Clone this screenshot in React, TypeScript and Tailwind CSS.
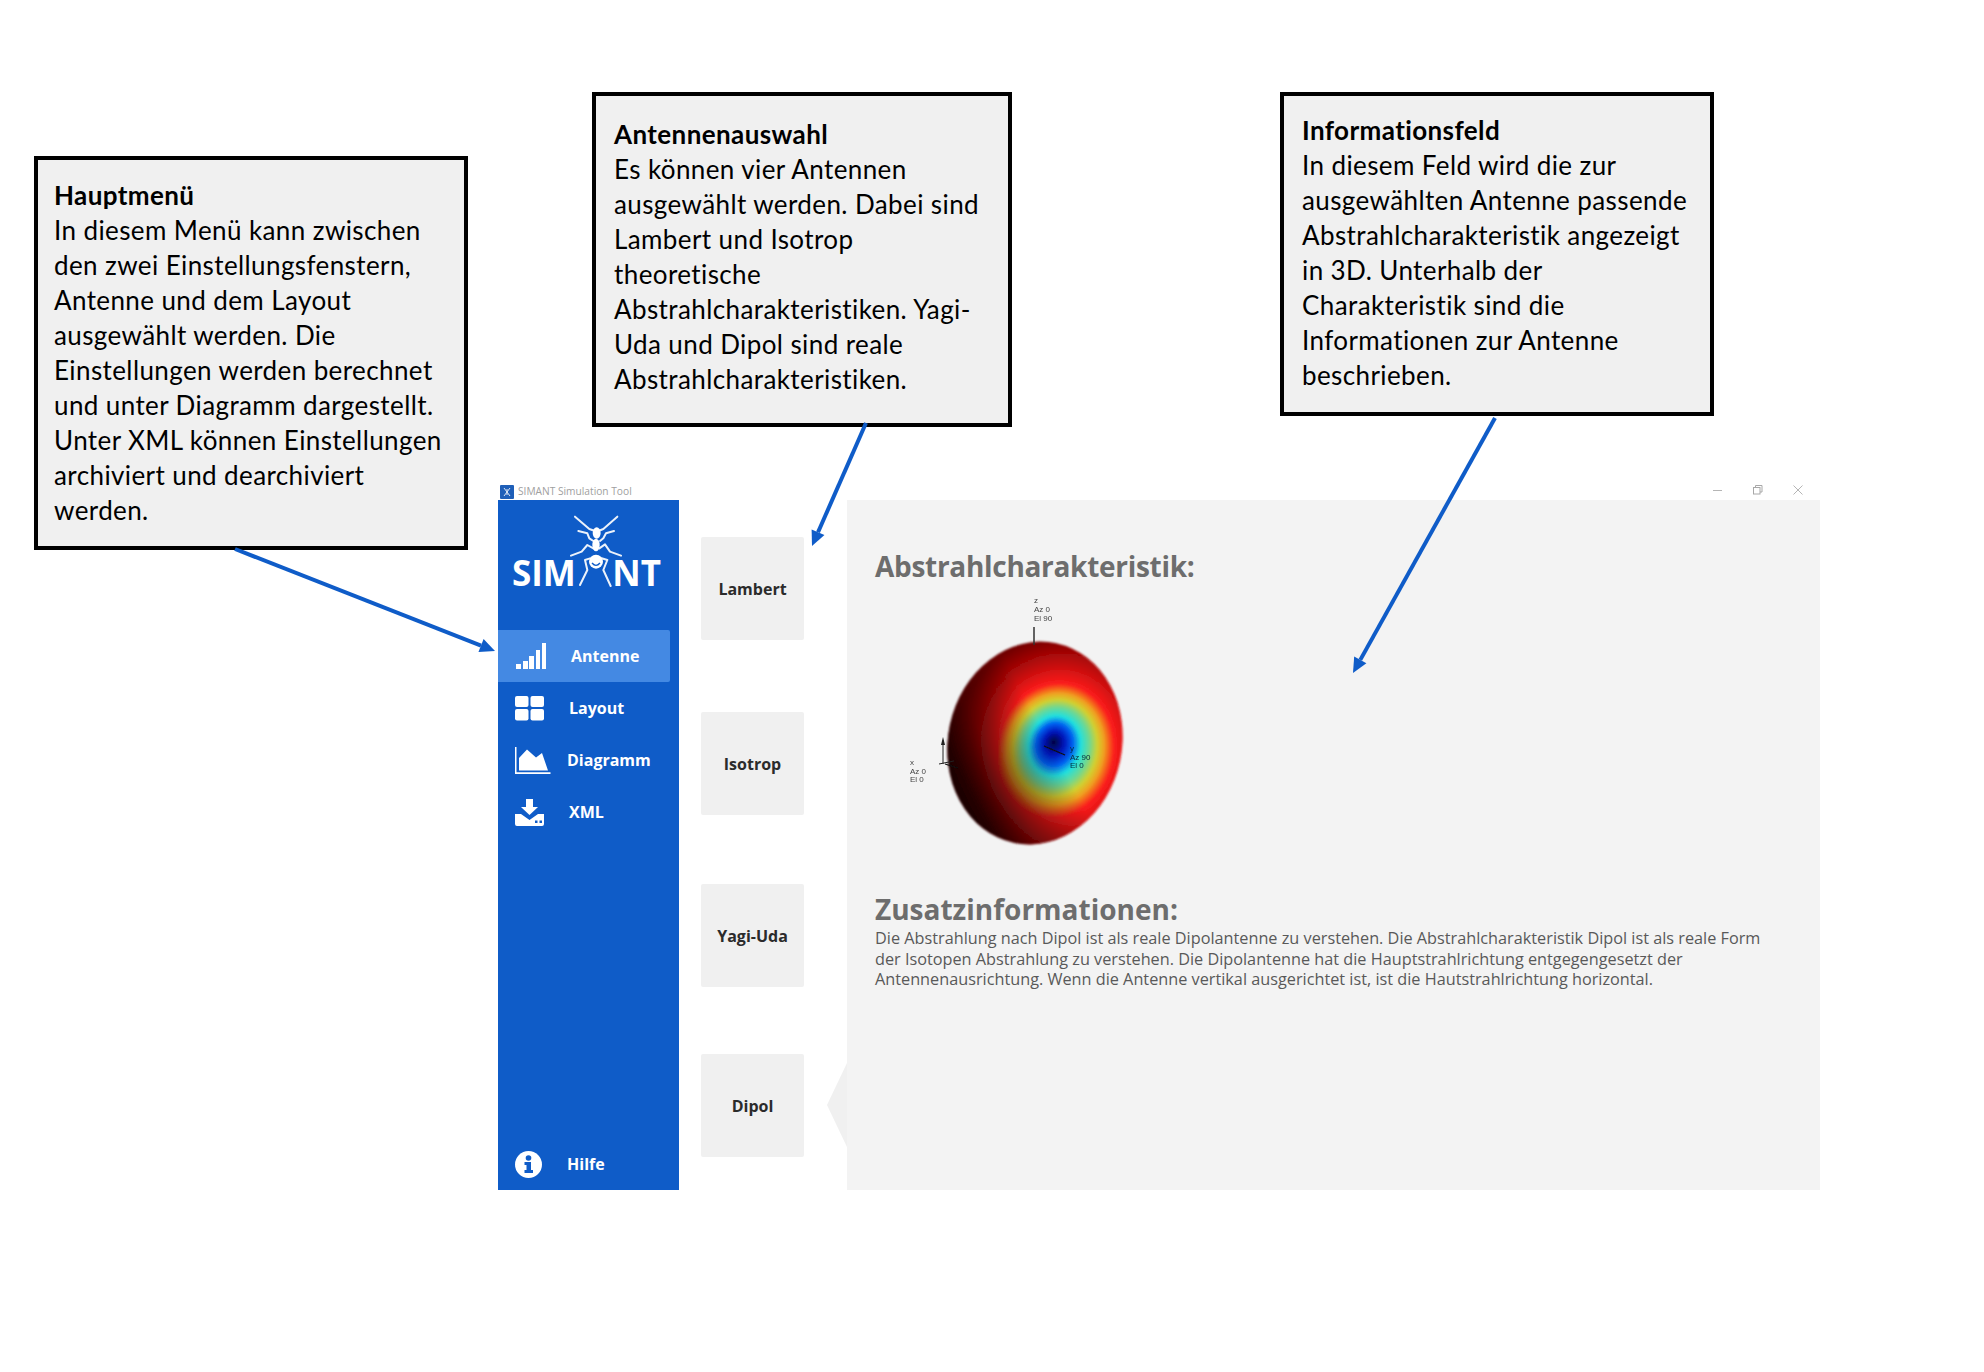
const body = "font-['Lato',sans-serif]";

function Callout({ className, title, lines }: { className: string; title: string; lines: string[] }) {
  return (
    <div className={`absolute border-4 border-black bg-[#f0f0f0] text-[26px] leading-[35px] tracking-[0.4px] text-black whitespace-nowrap ${body} ${className}`}>
      <div className="font-bold">{title}</div>
      {lines.map((l) => (
        <div key={l}>{l}</div>
      ))}
    </div>
  );
}

function Arrow({ x1, y1, x2, y2 }: { x1: number; y1: number; x2: number; y2: number }) {
  const a = Math.atan2(y2 - y1, x2 - x1);
  const len = 15;
  const w = 7;
  const bx = x2 - Math.cos(a) * len;
  const by = y2 - Math.sin(a) * len;
  const px = -Math.sin(a) * w;
  const py = Math.cos(a) * w;
  return (
    <g>
      <line x1={x1} y1={y1} x2={bx} y2={by} stroke="#0f5cc8" strokeWidth="4" />
      <polygon points={`${x2},${y2} ${bx + px},${by + py} ${bx - px},${by - py}`} fill="#0f5cc8" />
    </g>
  );
}

function AntLogo() {
  return (
    <svg className="absolute left-[2px] top-[5px]" width="170" height="100" viewBox="0 0 510 300" fill="none">
      <g stroke="#fff" strokeWidth="6" strokeLinecap="round" strokeLinejoin="round" opacity="0.92">
        <path d="M225 35 L268 72 L285 78" />
        <path d="M352 35 L310 72 L295 78" />
        <path d="M235 78 L262 85 L268 100 L280 108" />
        <path d="M342 78 L318 85 L310 100 L300 108" />
        <path d="M213 152 L245 140 L262 120 L280 130" />
        <path d="M363 152 L330 140 L315 118 L298 130" />
        <path d="M240 240 L262 195 L255 165 L270 160" />
        <path d="M332 243 L310 195 L322 165 L305 160" />
      </g>
      <ellipse cx="290" cy="84" rx="12" ry="17" fill="#fff" />
      <ellipse cx="288" cy="120" rx="11" ry="19" fill="#fff" />
      <circle cx="288" cy="170" r="21" fill="#fff" />
      <path d="M276 174 Q288 188 300 174" stroke="#0f5cc8" strokeWidth="4" fill="none" />
    </svg>
  );
}

function SignalIcon() {
  return (
    <svg width="32" height="28" viewBox="0 0 32 28" fill="#fff">
      <rect x="1" y="22" width="5" height="5" />
      <rect x="8" y="19" width="5" height="8" />
      <rect x="14" y="14" width="5" height="13" />
      <rect x="21" y="8" width="4" height="19" />
      <rect x="27" y="1" width="4" height="26" />
    </svg>
  );
}

function LayoutIcon() {
  return (
    <svg width="30" height="25" viewBox="0 0 30 25" fill="#fff">
      <rect x="0" y="0" width="13.5" height="11" rx="2" />
      <rect x="15.5" y="0" width="13.5" height="11" rx="2" />
      <rect x="0" y="13" width="13.5" height="11.5" rx="2" />
      <rect x="15.5" y="13" width="13.5" height="11.5" rx="2" />
    </svg>
  );
}

function ChartIcon() {
  return (
    <svg width="36" height="27" viewBox="0 0 36 27" fill="#fff">
      <path d="M0 0 H1.5 V25.2 H35.5 V27 H0 Z" />
      <path d="M4 23.5 V11 L12 2.5 L21 10.5 L27 6 L33 23.5 Z" />
    </svg>
  );
}

function DownloadIcon() {
  return (
    <svg width="29" height="27" viewBox="0 0 29 27" fill="#fff">
      <path d="M11 0 H18 V8 H23 L14.500 16 L6 8 H11 Z" />
      <path d="M0 15 H6 L14.500 21 L23 15 H29 V25 Q29 27 27 27 H2 Q0 27 0 25 Z" />
      <rect x="20" y="21.500" width="2.500" height="2.500" fill="#0f5cc8" />
      <rect x="24.500" y="21.500" width="2.500" height="2.500" fill="#0f5cc8" />
    </svg>
  );
}

function InfoIcon() {
  return (
    <svg width="27" height="27" viewBox="0 0 27 27">
      <circle cx="13.500" cy="13.500" r="13.500" fill="#fff" />
      <circle cx="13.500" cy="7" r="2.800" fill="#0f5cc8" />
      <path d="M9.500 11 H16 V19 H18 V22 H9.500 V19 H11.500 V14 H9.500 Z" fill="#0f5cc8" />
    </svg>
  );
}

function NavItem({ icon, label, textClass, active }: { icon: React.ReactNode; label: string; textClass: string; active?: boolean }) {
  return (
    <div className={`flex h-[52px] w-[172px] items-center rounded-r-[2px] pl-[17px] text-[16px] font-bold text-white ${active ? "bg-[#4489e3]" : ""}`}>
      <div className="flex w-[50px] shrink-0 items-center">{icon}</div>
      <span className={textClass}>{label}</span>
    </div>
  );
}

function ChoiceButton({ label, className }: { label: string; className: string }) {
  return (
    <div className={`flex h-[103px] w-[103px] items-center justify-center rounded-[2px] bg-[#f0f0f0] text-[16px] font-bold text-[#2b2b2b] ${className}`}>
      {label}
    </div>
  );
}

function Pattern() {
  return (
    <svg className="-mt-[6px] -ml-[15px] block" width="380" height="290" viewBox="0 0 380 290" fontFamily="'Liberation Sans', sans-serif">
      <defs>
        <radialGradient
          id="rings"
          gradientUnits="userSpaceOnUse"
          cx="200"
          cy="173"
          r="125"
          fx="192"
          fy="158"
          gradientTransform="translate(200 173) scale(0.86 1) translate(-200 -173)"
        >
          <stop offset="0" stopColor="#00043c" />
          <stop offset="0.09" stopColor="#0014b8" />
          <stop offset="0.17" stopColor="#0060f0" />
          <stop offset="0.24" stopColor="#20e0e0" />
          <stop offset="0.32" stopColor="#70d890" />
          <stop offset="0.39" stopColor="#d2d030" />
          <stop offset="0.45" stopColor="#f0a020" />
          <stop offset="0.54" stopColor="#fb1c1c" />
          <stop offset="0.78" stopColor="#b00808" />
          <stop offset="1" stopColor="#700000" />
        </radialGradient>
        <linearGradient id="shade" gradientUnits="userSpaceOnUse" x1="95" y1="240" x2="190" y2="160">
          <stop offset="0" stopColor="#0c0000" stopOpacity="1" />
          <stop offset="0.25" stopColor="#180000" stopOpacity="0.9" />
          <stop offset="0.55" stopColor="#200000" stopOpacity="0.5" />
          <stop offset="1" stopColor="#200000" stopOpacity="0" />
        </linearGradient>
        <filter id="soft" x="-10%" y="-10%" width="120%" height="120%">
          <feGaussianBlur stdDeviation="0.8" />
        </filter>
        <filter id="softer">
          <feGaussianBlur stdDeviation="0.45" />
        </filter>
      </defs>
      <g filter="url(#soft)">
        <ellipse cx="175" cy="163" rx="87" ry="102" transform="rotate(12 175 163)" fill="url(#rings)" />
        <ellipse cx="175" cy="163" rx="87" ry="102" transform="rotate(12 175 163)" fill="url(#shade)" />
      </g>
      <g filter="url(#softer)">
        <line x1="174" y1="47" x2="174" y2="65" stroke="#333" strokeWidth="1.500" />
        <line x1="184" y1="166" x2="205" y2="175" stroke="#111" strokeWidth="1.200" />
        <line x1="83" y1="160" x2="83" y2="184" stroke="#222" strokeWidth="1" />
        <polygon points="83,157 81,165 85,165" fill="#222" />
        <line x1="79" y1="184" x2="94" y2="181" stroke="#222" strokeWidth="1" />
        <line x1="85" y1="184" x2="98" y2="188" stroke="#111" strokeWidth="1.200" />
        <g fontSize="8" fill="#444">
          <text x="174" y="23">z</text>
          <text x="174" y="32">Az 0</text>
          <text x="174" y="41">El 90</text>
          <text x="50" y="185">x</text>
          <text x="50" y="194">Az 0</text>
          <text x="50" y="202">El 0</text>
        </g>
        <g fontSize="8" fill="#0a2a3a">
          <text x="210" y="171">y</text>
          <text x="210" y="180">Az 90</text>
          <text x="210" y="188">El 0</text>
        </g>
      </g>
    </svg>
  );
}

export default function App() {
  return (
    <div className="relative h-[1372px] w-[1984px] overflow-hidden bg-white pl-[498px] pt-[483px]">
      {/* APP WINDOW */}
      <div className="flex h-[707px] w-[1322px] flex-col font-['Open_Sans',sans-serif]">
        <div className="flex h-[17px] items-center pl-[2px]">
          <svg className="mr-[4px]" width="14" height="14" viewBox="0 0 14 14">
            <rect width="14" height="14" rx="1" fill="#1f5fb8" />
            <path d="M4 3 L10 11 M10 3 L4 11 M7 4 V10" stroke="#dfe8f5" strokeWidth="1" fill="none" />
          </svg>
          <span className="text-[10.2px] leading-none text-[#a0a0a0]">SIMANT Simulation Tool</span>
          <div className="ml-auto flex items-center gap-[30px] pb-[3px] pr-[17px]">
            <svg width="10" height="10" viewBox="0 0 10 10" stroke="#b5b5b5" fill="none">
              <path d="M0 5.500 H9" />
            </svg>
            <svg width="10" height="10" viewBox="0 0 10 10" stroke="#a8a8a8" fill="none">
              <rect x="0.500" y="2.500" width="6.500" height="6.500" />
              <path d="M2.500 2.500 V0.500 H9 V7 H7" />
            </svg>
            <svg width="10" height="10" viewBox="0 0 10 10" stroke="#b5b5b5" fill="none">
              <path d="M0.500 0.500 L9.500 9.500 M9.500 0.500 L0.500 9.500" />
            </svg>
          </div>
        </div>

        <div className="flex min-h-0 flex-1">
          {/* SIDEBAR */}
          <div className="flex h-full w-[181px] shrink-0 flex-col bg-[#0f5cc8]">
            <div className="relative h-[130px]">
              <AntLogo />
              <div className="flex justify-between pl-[14px] pr-[18px] pt-[55px] text-[35px] font-bold leading-none text-white">
                <span>SIM</span>
                <span>NT</span>
              </div>
            </div>
            <NavItem icon={<SignalIcon />} label="Antenne" textClass="ml-[6px]" active />
            <NavItem icon={<LayoutIcon />} label="Layout" textClass="ml-[4px]" />
            <NavItem icon={<ChartIcon />} label="Diagramm" textClass="ml-[2px]" />
            <NavItem icon={<DownloadIcon />} label="XML" textClass="ml-[4px]" />
            <div className="mt-auto pt-[2px]">
              <NavItem icon={<InfoIcon />} label="Hilfe" textClass="ml-[2px]" />
            </div>
          </div>

          {/* ANTENNA CHOICE */}
          <div className="ml-[22px] flex w-[103px] shrink-0 flex-col pt-[37px]">
            <ChoiceButton label="Lambert" className="" />
            <ChoiceButton label="Isotrop" className="mt-[72px]" />
            <ChoiceButton label="Yagi-Uda" className="mt-[69px]" />
            <ChoiceButton label="Dipol" className="mt-[67px]" />
          </div>

          {/* NOTCH */}
          <div className="ml-[23px] flex w-[20px] shrink-0 flex-col pt-[563px]">
            <div className="h-[84px] w-[20px] bg-[#f0f0f0] [clip-path:polygon(100%_0,0_50%,100%_100%)]" />
          </div>

          {/* INFO PANEL */}
          <div className="flex-1 bg-[#f3f3f3] pl-[28px]">
            <h2 className="pt-[46px] text-[28px] font-bold leading-[40px] tracking-[-0.3px] text-[#6d6d6d]">Abstrahlcharakteristik:</h2>
            <Pattern />
            <h2 className="mt-[19px] text-[28px] font-bold leading-[40px] text-[#6d6d6d]">Zusatzinformationen:</h2>
            <p className="-mt-[1px] whitespace-nowrap text-[16.25px] leading-[20.5px] text-[#595959]">
              Die Abstrahlung nach Dipol ist als reale Dipolantenne zu verstehen. Die Abstrahlcharakteristik Dipol ist als reale Form
              <br />
              der Isotopen Abstrahlung zu verstehen. Die Dipolantenne hat die Hauptstrahlrichtung entgegengesetzt der
              <br />
              Antennenausrichtung. Wenn die Antenne vertikal ausgerichtet ist, ist die Hautstrahlrichtung horizontal.
            </p>
          </div>
        </div>
      </div>

      {/* ANNOTATIONS */}
      <Callout
        className="left-[34px] top-[156px] h-[394px] w-[434px] pl-[16px] pt-[18px]"
        title="Hauptmenü"
        lines={[
          "In diesem Menü kann zwischen",
          "den zwei Einstellungsfenstern,",
          "Antenne und dem Layout",
          "ausgewählt werden. Die",
          "Einstellungen werden berechnet",
          "und unter Diagramm dargestellt.",
          "Unter XML können Einstellungen",
          "archiviert und dearchiviert",
          "werden.",
        ]}
      />
      <Callout
        className="left-[592px] top-[92px] h-[335px] w-[420px] pl-[18px] pt-[21px]"
        title="Antennenauswahl"
        lines={[
          "Es können vier Antennen",
          "ausgewählt werden. Dabei sind",
          "Lambert und Isotrop",
          "theoretische",
          "Abstrahlcharakteristiken. Yagi-",
          "Uda und Dipol sind reale",
          "Abstrahlcharakteristiken.",
        ]}
      />
      <Callout
        className="left-[1280px] top-[92px] h-[324px] w-[434px] pl-[18px] pt-[17px]"
        title="Informationsfeld"
        lines={[
          "In diesem Feld wird die zur",
          "ausgewählten Antenne passende",
          "Abstrahlcharakteristik angezeigt",
          "in 3D. Unterhalb der",
          "Charakteristik sind die",
          "Informationen zur Antenne",
          "beschrieben.",
        ]}
      />
      <svg className="pointer-events-none absolute left-0 top-0" width="1984" height="1372">
        <Arrow x1={235} y1={549} x2={495} y2={651} />
        <Arrow x1={866} y1={423} x2={812} y2={546} />
        <Arrow x1={1495} y1={418} x2={1353} y2={673} />
      </svg>
    </div>
  );
}
